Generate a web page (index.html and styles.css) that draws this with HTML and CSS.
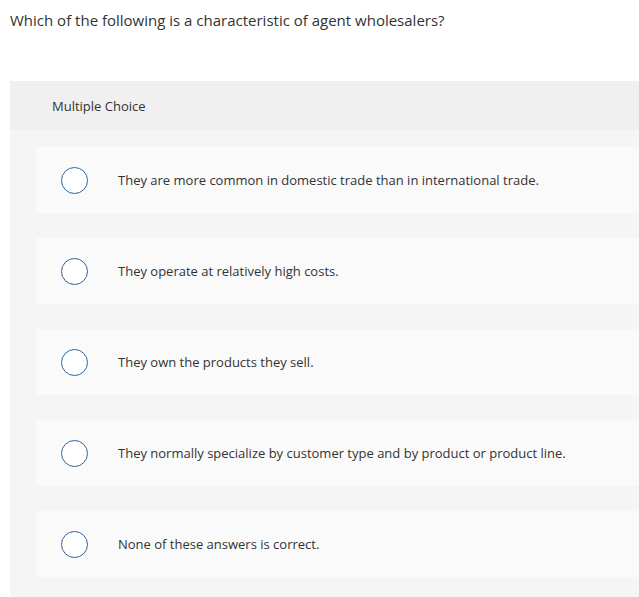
FILE: index.html
```html
<!DOCTYPE html>
<html>
<head>
<meta charset="utf-8">
<link rel="stylesheet" href="styles.css">
</head>
<body>
<p class="question">Which of the following is a characteristic of agent wholesalers?</p>
<div class="panel">
  <div class="panel-head">Multiple Choice</div>
  <div class="panel-body">
    <div class="option"><span class="radio"></span><span class="label">They are more common in domestic trade than in international trade.</span></div>
    <div class="option"><span class="radio"></span><span class="label">They operate at relatively high costs.</span></div>
    <div class="option"><span class="radio"></span><span class="label">They own the products they sell.</span></div>
    <div class="option"><span class="radio"></span><span class="label">They normally specialize by customer type and by product or product line.</span></div>
    <div class="option"><span class="radio"></span><span class="label">None of these answers is correct.</span></div>
  </div>
</div>
</body>
</html>
```
FILE: styles.css
```css
html, body {
  margin: 0;
  padding: 0;
  background: #ffffff;
  overflow: hidden;
}
body {
  font-family: "Open Sans", Lato, Arial, sans-serif;
  color: #333333;
}
.question {
  box-sizing: border-box;
  margin: 0;
  padding: 10px 10px 0 10px;
  font-size: 15px;
  line-height: 20px;
  height: 81px;
}
.panel {
  margin-left: 10px;
  background: #f5f5f5;
}
.panel-head {
  background: #f0f0f0;
  height: 49px;
  display: flex;
  align-items: center;
  padding-left: 42px;
  font-size: 13px;
}
.panel-body {
  padding: 17px 0 30px 26px;
  display: flex;
  flex-direction: column;
  gap: 25px;
}
.option {
  background: #fafafa;
  height: 66px;
  border-radius: 2px 0 0 2px;
  display: flex;
  align-items: center;
  padding-left: 25px;
}
.radio {
  width: 25px;
  height: 25px;
  border: 1.5px solid #2f6399;
  border-radius: 50%;
  background: #ffffff;
  flex: none;
}
.label {
  margin-left: 30px;
  font-size: 13px;
}
```
